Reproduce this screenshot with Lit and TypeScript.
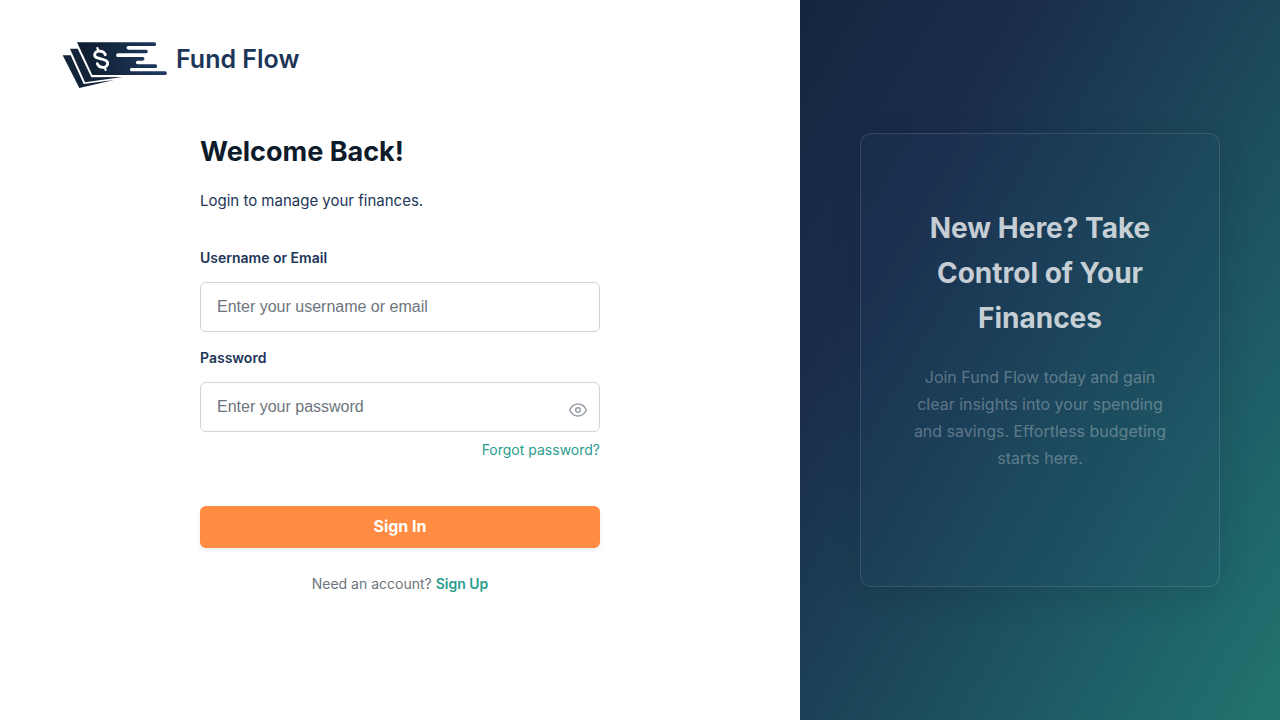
import { LitElement, html, css } from "lit";
import { customElement, state } from "lit/decorators.js";

@customElement("fund-flow-logo")
class FundFlowLogo extends LitElement {
  static styles = css`
    :host { display: block; }
    .mark { display: block; width: 110px; height: 50px; }
  `;

  render() {
    return html`
      <svg class="mark" viewBox="30 30 330 150" aria-hidden="true">
        <defs>
          <linearGradient id="ink" x1="0" y1="0" x2="1" y2="0">
            <stop offset="0" stop-color="#0e1c2b" />
            <stop offset="1" stop-color="#1f3a63" />
          </linearGradient>
        </defs>
        <path fill="#132439" d="M38 76H62L101 162L192 150L88 174Z" />
        <path fill="#132439" d="M60 56H83L124 142L217 141L105 157Z" />
        <path
          fill="url(#ink)"
          d="M81 37H313a5.5 5.5 0 0 1 0 11H235a5.500 5.500 0 0 0 0 11H288a5.500 5.500 0 0 1 0 11H204a5.500 5.500 0 0 0 0 11H278a5.500 5.500 0 0 1 0 11H263a5.500 5.500 0 0 0 0 11H316a5.500 5.500 0 0 1 0 11H243a5.500 5.500 0 0 0 0 10H345a5.500 5.500 0 0 1 0 11H127Z"
        />
        <g fill="none" stroke="#fff" stroke-linecap="round">
          <path stroke-width="8.500" d="M166 74C160 60 136 60 134 74C132 90 170 83 173 98C175 114 149 118 142 101" />
          <path stroke-width="6.500" d="M142 54L145 62M164 112L167 120" />
        </g>
      </svg>
    `;
  }
}

@customElement("login-form")
class LoginForm extends LitElement {
  @state() private revealed = false;

  static styles = css`
    :host { display: block; width: 100%; max-width: 400px; }
    * { box-sizing: border-box; }
    .title { margin: 0 0 15px; font-size: 27px; line-height: 44px; font-weight: 700; color: #0d1b2a; }
    .lead { margin: 0 0 35px; font-size: 15px; line-height: 24px; color: #1d3557; }
    .label { display: block; margin-bottom: 14px; font-size: 14px; line-height: 20px; font-weight: 600; color: #1d3557; }
    .field { display: grid; margin-bottom: 16px; }
    .field.last { margin-bottom: 7px; }
    .input {
      grid-area: 1 / 1;
      width: 100%;
      height: 50px;
      padding: 0 16px;
      border: 1px solid #ced4da;
      border-radius: 6px;
      background: #fff;
      font: 16px "Liberation Sans", Arial, sans-serif;
      color: #1d3557;
      outline: none;
    }
    .input::placeholder { color: #6c757d; opacity: 1; }
    .input:focus { border-color: #2a9d8f; }
    .toggle {
      grid-area: 1 / 1;
      justify-self: end;
      align-self: end;
      display: flex;
      margin: 0 12px 12px 0;
      padding: 0;
      border: 0;
      background: none;
      color: #9a9fa8;
      cursor: pointer;
    }
    .eye { display: block; width: 20px; height: 20px; }
    .forgot { display: flex; justify-content: flex-end; margin-bottom: 46px; font-size: 14px; line-height: 21px; }
    .link { color: #2a9d8f; text-decoration: none; }
    .link:hover { text-decoration: underline; }
    .link.strong { font-weight: 600; }
    .submit {
      display: block;
      width: 100%;
      height: 42px;
      padding: 0 0 2px;
      border: 0;
      border-radius: 6px;
      background: #ff8c42;
      box-shadow: 0 2px 4px rgba(0, 0, 0, 0.08);
      font: 700 16px "Inter", sans-serif;
      color: #fff;
      cursor: pointer;
    }
    .signup { margin: 25px 0 0; font-size: 14px; line-height: 21px; text-align: center; color: #6c757d; }
  `;

  render() {
    return html`
      <h1 class="title">Welcome Back!</h1>
      <p class="lead">Login to manage your finances.</p>
      <form @submit=${(e: Event) => e.preventDefault()}>
        <label class="label" for="user">Username or Email</label>
        <div class="field">
          <input class="input" id="user" type="text" placeholder="Enter your username or email" />
        </div>
        <label class="label" for="pass">Password</label>
        <div class="field last">
          <input class="input" id="pass" type=${this.revealed ? "text" : "password"} placeholder="Enter your password" />
          <button class="toggle" type="button" aria-label="Show password" @click=${() => (this.revealed = !this.revealed)}>
            <svg class="eye" viewBox="0 0 20 20" fill="none" stroke="currentColor" stroke-width="1.500" stroke-linejoin="round">
              <path d="M1.700 10C3.400 6.200 6.400 4 10 4s6.600 2.200 8.300 6c-1.700 3.800-4.700 6-8.300 6s-6.600-2.200-8.300-6z" />
              <circle cx="10" cy="10" r="2.300" />
            </svg>
          </button>
        </div>
        <div class="forgot"><a class="link" href="#forgot">Forgot password?</a></div>
        <button class="submit" type="submit">Sign In</button>
      </form>
      <p class="signup">Need an account? <a class="link strong" href="#signup">Sign Up</a></p>
    `;
  }
}

@customElement("promo-card")
class PromoCard extends LitElement {
  static styles = css`
    :host {
      display: block;
      box-sizing: border-box;
      width: 100%;
      max-width: 360px;
      padding: 72px 48px 113px;
      border: 1px solid rgba(255, 255, 255, 0.12);
      border-radius: 12px;
      background: rgba(34, 66, 106, 0.15);
      box-shadow: 0 8px 32px rgba(0, 0, 0, 0.1);
      text-align: center;
    }
    .title { margin: 0 0 23px; font-size: 28px; line-height: 45px; font-weight: 700; color: rgba(255, 255, 255, 0.75); }
    .text { margin: 0 0 1px; font-size: 16px; line-height: 27px; color: rgba(255, 255, 255, 0.3); }
  `;

  render() {
    return html`
      <h2 class="title">New Here? Take Control of Your Finances</h2>
      <p class="text">Join Fund Flow today and gain clear insights into your spending and savings. Effortless budgeting starts here.</p>
    `;
  }
}

@customElement("app-root")
class AppRoot extends LitElement {
  static styles = css`
    :host {
      display: grid;
      grid-template-columns: 5fr 3fr;
      min-height: 100vh;
      background: #fff;
      font-family: "Inter", sans-serif;
    }
    .main { display: flex; flex-direction: column; }
    .brand { display: flex; align-items: flex-start; gap: 6px; padding: 40px 60px; }
    .name { font-size: 25px; line-height: 38px; font-weight: 600; color: #1d3557; }
    .body { display: flex; justify-content: center; padding: 0 40px 40px; }
    .promo {
      display: flex;
      align-items: center;
      justify-content: center;
      padding: 40px;
      background: linear-gradient(120deg, #14263e 0%, #1a2c4b 25%, #1f696c 88%, #22756d 100%);
    }
  `;

  render() {
    return html`
      <main class="main">
        <header class="brand">
          <fund-flow-logo></fund-flow-logo>
          <span class="name">Fund Flow</span>
        </header>
        <section class="body"><login-form></login-form></section>
      </main>
      <aside class="promo"><promo-card></promo-card></aside>
    `;
  }
}
